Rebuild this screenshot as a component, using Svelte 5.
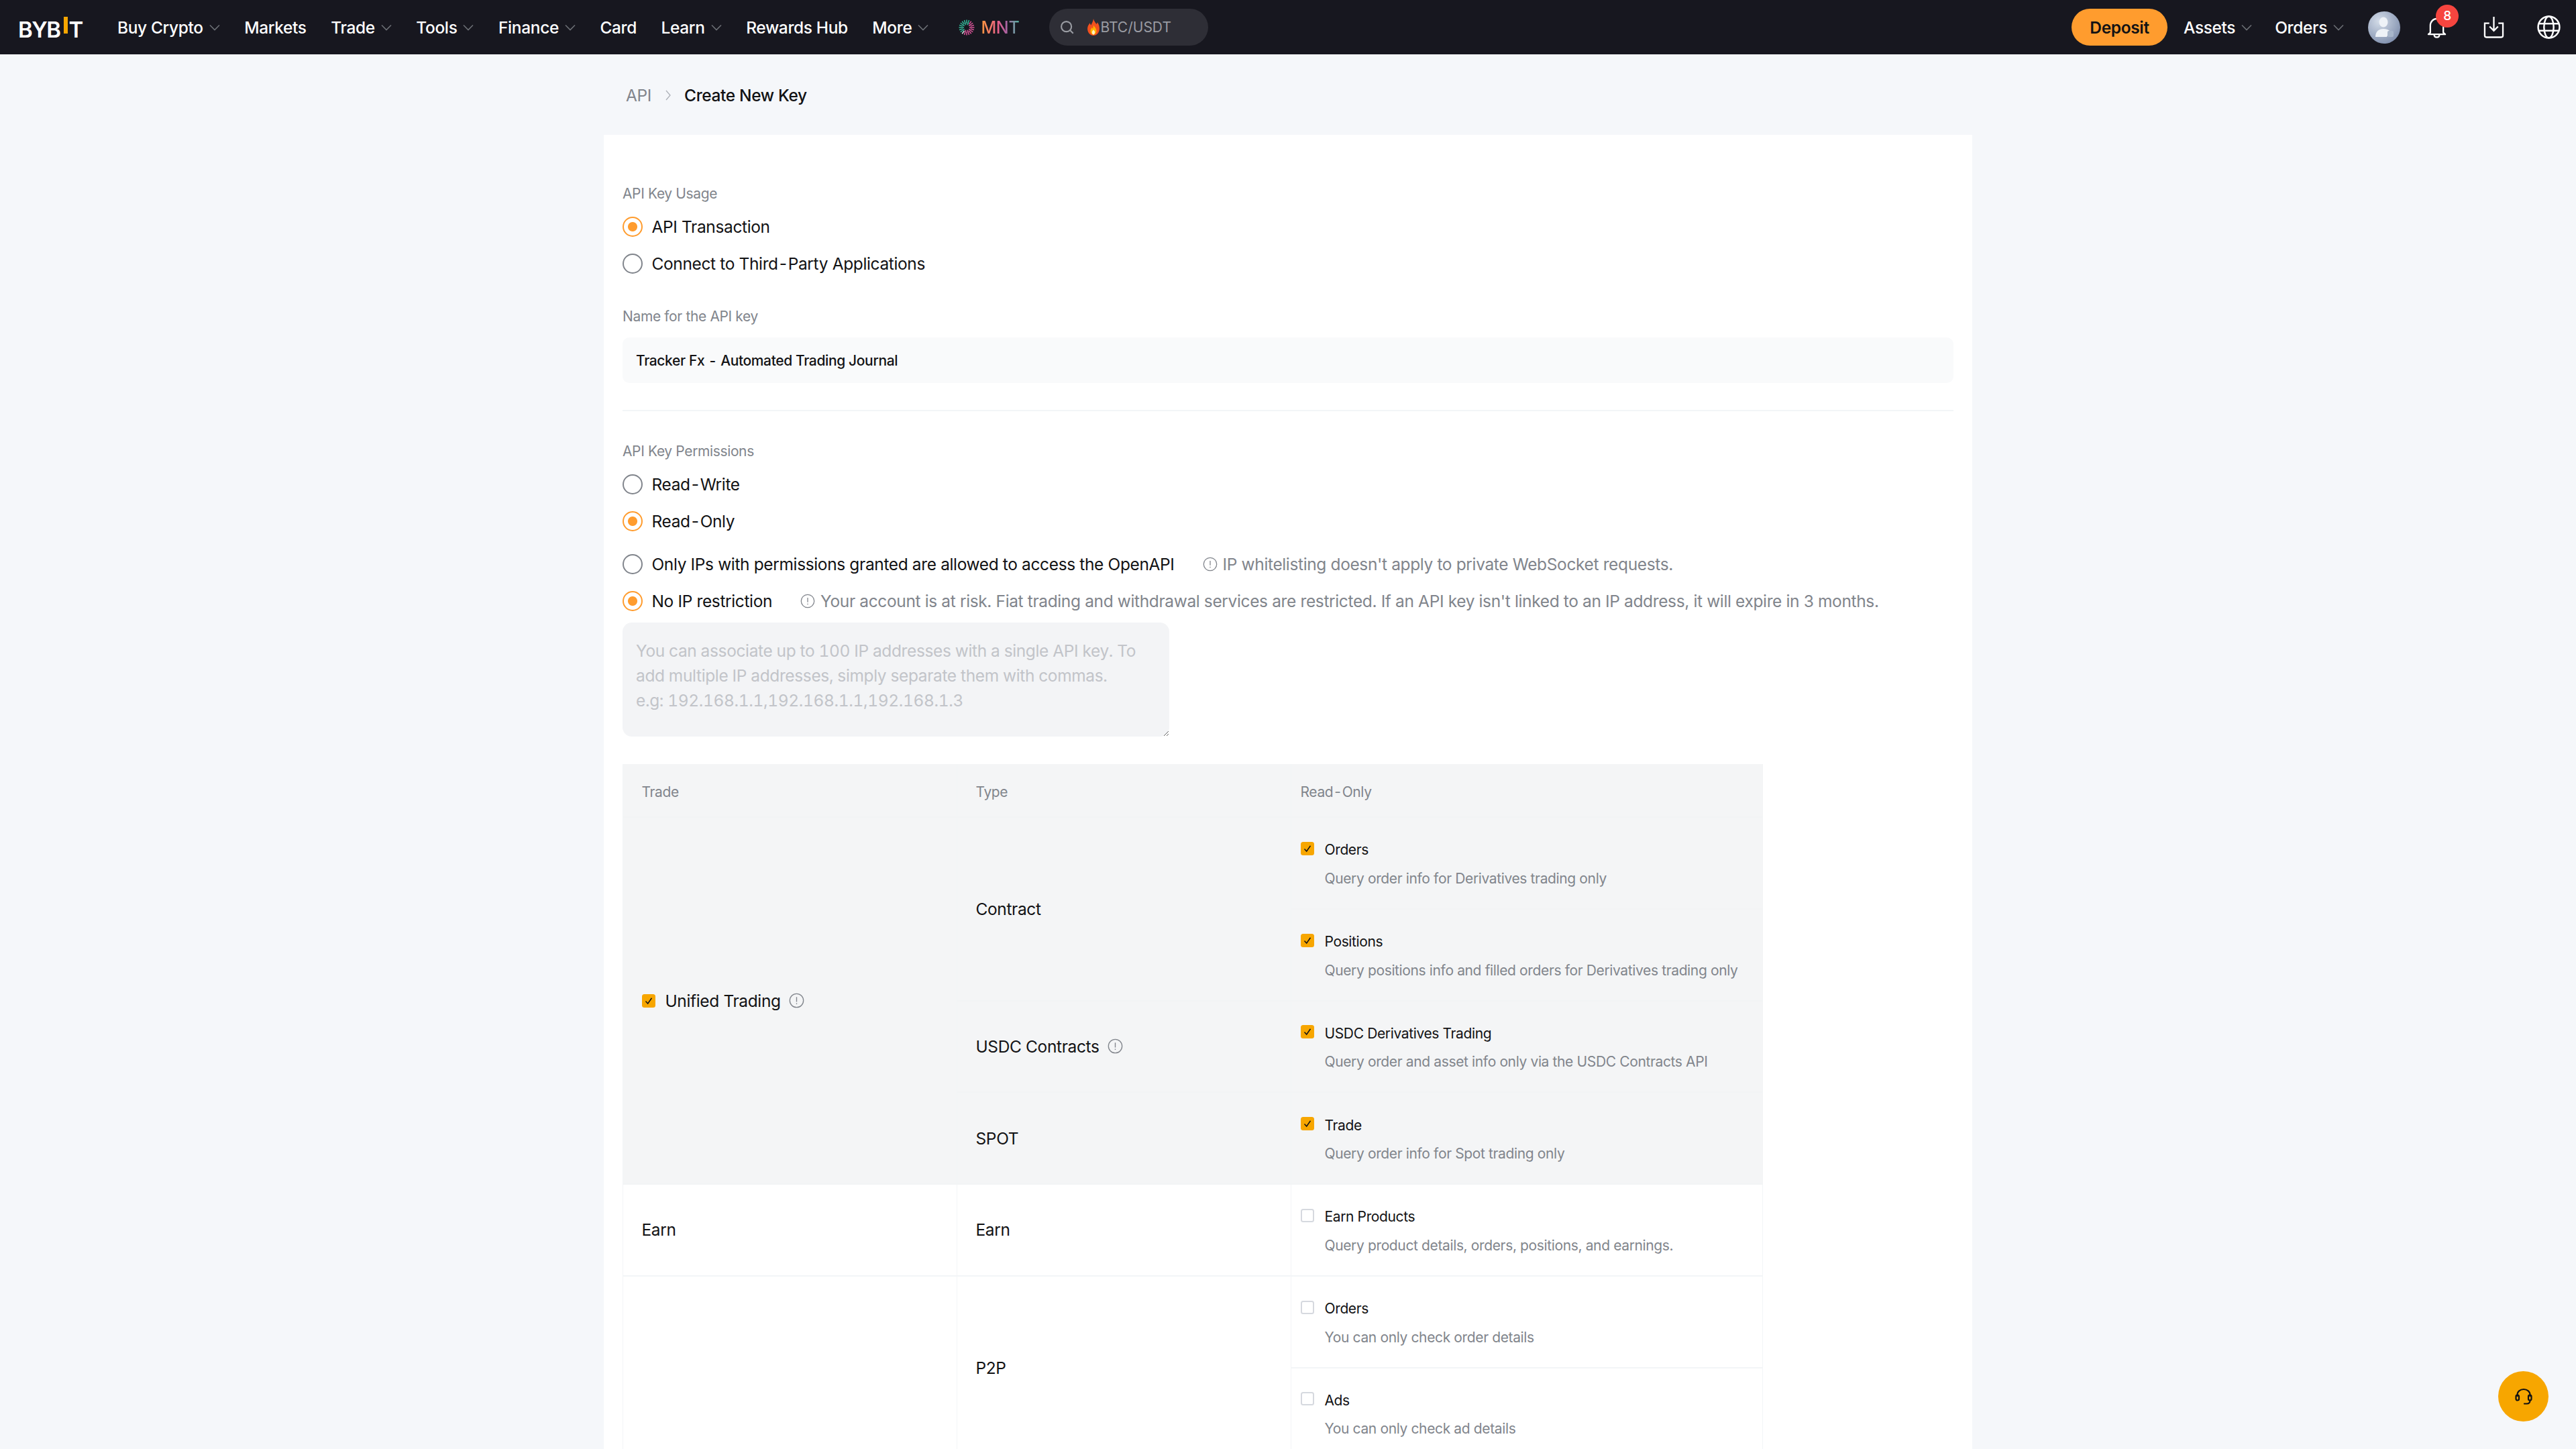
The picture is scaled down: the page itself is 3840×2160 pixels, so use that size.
<script>
	const navLeft = [
		{ label: 'Buy Crypto', arrow: true },
		{ label: 'Markets' },
		{ label: 'Trade', arrow: true },
		{ label: 'Tools', arrow: true },
		{ label: 'Finance', arrow: true },
		{ label: 'Card' },
		{ label: 'Learn', arrow: true },
		{ label: 'Rewards Hub' },
		{ label: 'More', arrow: true }
	];

	const groups = [
		{
			name: 'Unified Trading',
			info: true,
			checkbox: true,
			shaded: true,
			types: [
				{
					name: 'Contract',
					perms: [
						{ name: 'Orders', desc: 'Query order info for Derivatives trading only', on: true },
						{ name: 'Positions', desc: 'Query positions info and filled orders for Derivatives trading only', on: true }
					]
				},
				{
					name: 'USDC Contracts',
					info: true,
					perms: [
						{ name: 'USDC Derivatives Trading', desc: 'Query order and asset info only via the USDC Contracts API', on: true }
					]
				},
				{
					name: 'SPOT',
					perms: [{ name: 'Trade', desc: 'Query order info for Spot trading only', on: true }]
				}
			]
		},
		{
			name: 'Earn',
			types: [
				{
					name: 'Earn',
					perms: [{ name: 'Earn Products', desc: 'Query product details, orders, positions, and earnings.' }]
				}
			]
		},
		{
			name: '',
			types: [
				{
					name: 'P2P',
					perms: [
						{ name: 'Orders', desc: 'You can only check order details' },
						{ name: 'Ads', desc: 'You can only check ad details' }
					]
				}
			]
		}
	];

	const rowCount = (group) => group.types.reduce((n, t) => n + t.perms.length, 0);

	const mantleRays = Array.from({ length: 20 }, (_, i) => {
		const a = (i / 20) * Math.PI * 2;
		const inner = i % 2 ? 6 : 4;
		return {
			x1: 12 + Math.cos(a) * inner,
			y1: 12 + Math.sin(a) * inner,
			x2: 12 + Math.cos(a) * 11.5,
			y2: 12 + Math.sin(a) * 11.5,
			color: Math.cos(a - 0.6) > 0 ? '#d9559a' : Math.sin(a) > 0.6 ? '#d8efe8' : '#35b899'
		};
	});
</script>

{#snippet chevron()}
	<svg class="chevron" viewBox="0 0 16 10" fill="none" stroke="currentColor" stroke-width="1.6">
		<path d="M1 1.500 8 8.500 15 1.500" />
	</svg>
{/snippet}

{#snippet infoIcon(cls)}
	<svg class={cls} viewBox="0 0 24 24" fill="none" stroke="currentColor" stroke-width="1.4">
		<circle cx="12" cy="12" r="10.6" />
		<path d="M12 6.500v7.500M12 16.200v1.600" />
	</svg>
{/snippet}

{#snippet hyphenated(text)}{#each text.split('-') as part, i}{#if i}<span class="hy">-</span>{/if}{part}{/each}{/snippet}

{#snippet radio(on, label)}
	<div class="radio-row">
		<span class="radio" class:on></span>
		<span>{@render hyphenated(label)}</span>
	</div>
{/snippet}

{#snippet check(on)}
	<span class="check" class:on>
		{#if on}
			<svg viewBox="0 0 20 20" fill="none" stroke="#121214" stroke-width="1.5">
				<path d="M5.500 10.500 8.700 14 14.500 5.800" />
			</svg>
		{/if}
	</span>
{/snippet}

<div class="page">
	<header class="topbar">
		<div class="logo">
			<span>BYB</span>
			<i class="logo-bar"></i>
			<span>T</span>
		</div>

		<nav class="nav">
			{#each navLeft as item}
				<a class="nav-item">
					{item.label}
					{#if item.arrow}{@render chevron()}{/if}
				</a>
			{/each}
		</nav>

		<div class="mnt">
			<svg class="mnt-mark" viewBox="0 0 24 24" fill="none" stroke-width="1.5">
				{#each mantleRays as r}
					<line x1={r.x1} y1={r.y1} x2={r.x2} y2={r.y2} stroke={r.color} />
				{/each}
			</svg>
			<span class="mnt-text">MNT</span>
		</div>

		<div class="search">
			<svg class="search-icon" viewBox="0 0 24 24" fill="none" stroke="currentColor" stroke-width="2.400">
				<circle cx="11" cy="11" r="8.600" />
				<path d="m17.200 17.200 5.400 5.400" />
			</svg>
			<svg class="flame" viewBox="0 0 20 28">
				<path d="M10 0c1 4 3 6 5 9 1-1 1.500-2 1.500-3 2.500 3 3.500 7 3.500 10.500C20 23 15.500 28 10 28S0 23 0 16.500C0 12 2.500 9.500 4 7c.5 1.500 1 2.500 2 3.500C7.500 7.500 9.500 4 10 0Z" fill="#f4511e" />
				<path d="M10 10c.5 3 5 5 5 10.500 0 3-2.200 6-5 6s-5-3-5-6c0-3 1.500-4.500 2.500-6 .5 1 1 1.500 1.500 2 .5-2 1-4 1-6.500Z" fill="#ffb300" />
				<path d="M10 18c.5 1.500 2.500 2.500 2.500 4.500S11.300 26.500 10 26.500s-2.500-1.800-2.500-4S9.500 20 10 18Z" fill="#fff3c4" />
			</svg>
			<span>BTC/USDT</span>
		</div>

		<div class="topbar-right">
			<a class="deposit">Deposit</a>
			<a class="nav-item">Assets {@render chevron()}</a>
			<a class="nav-item">Orders {@render chevron()}</a>
			<svg class="avatar" viewBox="0 0 48 48">
				<defs>
					<radialGradient id="avatarFill" cx="0.35" cy="0.3" r="0.85">
						<stop offset="0" stop-color="#d4dde9" />
						<stop offset="1" stop-color="#7686a6" />
					</radialGradient>
				</defs>
				<circle cx="24" cy="24" r="24" fill="url(#avatarFill)" />
				<ellipse cx="23" cy="16" rx="6.500" ry="7.500" fill="#eef2f7" />
				<path d="M11 38c0-8 5-12 12-12 4 0 7 1 9 3l-4 9H11Z" fill="#eef2f7" />
				<rect x="29" y="29" width="9" height="9" rx="2" fill="#a8b6ca" />
			</svg>
			<div class="bell">
				<svg viewBox="0 0 30 32" fill="none" stroke="#fff" stroke-width="2.400">
					<path d="M5 24V13C5 7 9.500 2.500 15 2.500S25 7 25 13v11l3 2.500H2L5 24Z" stroke-linejoin="round" />
					<path d="M11 27c0 2.500 1.800 4 4 4s4-1.500 4-4" />
				</svg>
				<span class="badge">8</span>
			</div>
			<svg class="tool-icon" viewBox="0 0 32 34" fill="none" stroke="#fff" stroke-width="2.400">
				<path d="M9 11H2v19a2.500 2.500 0 0 0 2.500 2.500h23A2.500 2.500 0 0 0 30 30V11h-7" />
				<path d="M16 1v21M9.500 16l6.500 6.500 6.500-6.500" />
			</svg>
			<svg class="tool-icon globe" viewBox="0 0 34 34" fill="none" stroke="#fff" stroke-width="2.400">
				<circle cx="17" cy="17" r="15.500" />
				<ellipse cx="17" cy="17" rx="7" ry="15.500" />
				<path d="M2 12h30M2 22h30" />
			</svg>
		</div>
	</header>

	<main class="content">
		<div class="crumbs">
			<span class="crumb-link">API</span>
			<svg class="crumb-arrow" viewBox="0 0 8 16" fill="none" stroke="currentColor" stroke-width="1.3">
				<path d="M1 1l6 7-6 7" />
			</svg>
			<span class="crumb-current">Create New Key</span>
		</div>

		<section class="card">
			<div class="label first">API Key Usage</div>
			{@render radio(true, 'API Transaction')}
			{@render radio(false, 'Connect to Third-Party Applications')}

			<div class="label name-label">Name for the API key</div>
			<div class="input">{@render hyphenated('Tracker Fx - Automated Trading Journal')}</div>
			<div class="divider"></div>

			<div class="label">API Key Permissions</div>
			{@render radio(false, 'Read-Write')}
			{@render radio(true, 'Read-Only')}

			<div class="ip-rows">
				<div class="radio-row">
					<span class="radio"></span>
					<span>Only IPs with permissions granted are allowed to access the OpenAPI</span>
					<span class="hint hint-a">
						{@render infoIcon('hint-icon')}
						IP whitelisting doesn't apply to private WebSocket requests.
					</span>
				</div>
				<div class="radio-row">
					<span class="radio on"></span>
					<span>No IP restriction</span>
					<span class="hint hint-b">
						{@render infoIcon('hint-icon')}
						Your account is at risk. Fiat trading and withdrawal services are restricted. If an API key isn't linked to an IP address, it will expire in 3 months.
					</span>
				</div>
			</div>

			<div class="ip-box">
				You can associate up to 100 IP addresses with a single API key. To add multiple IP addresses, simply separate them with commas.<br />
				e.g: 192.168.1.1,192.168.1.1,192.168.1.3
			</div>

			<div class="perm-table">
				<div class="cell head shaded col1">Trade</div>
				<div class="cell head shaded col2">Type</div>
				<div class="cell head shaded col3">{@render hyphenated('Read-Only')}</div>

				{#each groups as group}
					<div class="cell col1 body" class:shaded={group.shaded} style="grid-row: span {rowCount(group)}">
						{#if group.checkbox}{@render check(true)}{/if}
						<span>{group.name}</span>
						{#if group.info}{@render infoIcon('cell-info')}{/if}
					</div>
					{#each group.types as type}
						<div class="cell col2 body" class:shaded={group.shaded} style="grid-row: span {type.perms.length}">
							<span>{type.name}</span>
							{#if type.info}{@render infoIcon('cell-info')}{/if}
						</div>
						{#each type.perms as perm}
							<div class="cell col3 perm" class:shaded={group.shaded}>
								<div class="perm-name">
									{@render check(perm.on)}
									<span>{perm.name}</span>
								</div>
								<div class="perm-desc">{perm.desc}</div>
							</div>
						{/each}
					{/each}
				{/each}
			</div>
		</section>
	</main>

	<button class="support" aria-label="Support">
		<svg viewBox="0 0 26 26" fill="none" stroke="#121214" stroke-width="2.200">
			<path d="M3.500 13V10.500C3.500 5.500 7.500 2 13 2s9.500 3.500 9.500 8.500V13" />
			<rect x="1.500" y="10.500" width="4.500" height="8" rx="2.200" />
			<rect x="20" y="10.500" width="4.500" height="8" rx="2.200" />
			<path d="M22.500 18.500c0 3-2 5-5 5h-3.500" stroke-linecap="round" />
		</svg>
	</button>
</div>

<style>
	:global(body) {
		margin: 0;
		background: #f5f7fa;
	}

	.page {
		height: 2160px;
		overflow: hidden;
		font-family: Inter, 'Liberation Sans', sans-serif;
		font-size: 24.5px;
		letter-spacing: -0.015em;
		color: #121214;
		background: #f5f7fa;
	}

	.hy {
		margin: 0 2px;
	}

	.topbar {
		display: flex;
		align-items: center;
		height: 81px;
		padding: 0 23px 0 27px;
		background: #17171f;
		color: #fff;
	}

	.logo {
		display: flex;
		align-items: flex-start;
		width: 96px;
		height: 32px;
		margin: 0 52px 0 0;
		font-size: 33px;
		font-weight: 600;
		line-height: 38px;
		letter-spacing: -1.500px;
	}

	.logo-bar {
		flex: none;
		width: 6px;
		height: 25px;
		margin: 0 2px 0 5px;
		background: #f7a600;
	}

	.nav {
		display: flex;
		align-items: center;
		gap: 36.500px;
	}

	.nav-item {
		display: inline-flex;
		align-items: center;
		gap: 9px;
		font-weight: 500;
		white-space: nowrap;
	}

	.chevron {
		width: 16px;
		height: 10px;
		color: #6c6f75;
	}

	.mnt {
		display: flex;
		align-items: center;
		gap: 9px;
		margin-left: 45px;
	}

	.mnt-mark {
		width: 24px;
		height: 24px;
	}

	.mnt-text {
		font-weight: 500;
		font-size: 25px;
		color: transparent;
		background: linear-gradient(90deg, #ff9a3c 0%, #e8608a 45%, #b05fa0 65%, #55b0a0 100%);
		-webkit-background-clip: text;
		background-clip: text;
	}

	.search {
		display: flex;
		align-items: center;
		width: 237px;
		height: 55px;
		box-sizing: border-box;
		margin-left: 45px;
		padding-left: 16px;
		border-radius: 28px;
		background: #2e2e36;
		color: #9a9ca3;
		font-size: 21px;
		letter-spacing: 0;
	}

	.search-icon {
		width: 21px;
		height: 21px;
		margin-right: 20px;
	}

	.flame {
		width: 18px;
		height: 25px;
		margin-right: 1px;
	}

	.topbar-right {
		display: flex;
		align-items: center;
		margin-left: auto;
	}

	.deposit {
		display: flex;
		align-items: center;
		justify-content: center;
		width: 143px;
		height: 55px;
		margin-right: 24px;
		border-radius: 28px;
		background: #ff9c2e;
		color: #121214;
		font-weight: 600;
	}

	.topbar-right .nav-item + .nav-item {
		margin-left: 34px;
	}

	.avatar {
		width: 48px;
		height: 48px;
		margin-left: 36px;
	}

	.bell {
		position: relative;
		width: 29px;
		height: 32px;
		margin-left: 40px;
	}

	.bell svg {
		display: block;
		width: 100%;
		height: 100%;
	}

	.badge {
		position: absolute;
		top: -18px;
		left: 13px;
		width: 34px;
		height: 34px;
		border-radius: 50%;
		background: #f6453f;
		color: #fff;
		font-size: 19px;
		font-weight: 500;
		line-height: 34px;
		text-align: center;
	}

	.tool-icon {
		width: 31px;
		height: 33px;
		margin-left: 55px;
	}

	.globe {
		width: 35px;
		height: 35px;
		margin-left: 49px;
	}

	.crumbs {
		display: flex;
		align-items: center;
		width: 2040px;
		height: 42px;
		padding: 40px 0 38px 33px;
		box-sizing: content-box;
		margin-left: 900px;
	}

	.crumb-link {
		color: #81858c;
	}

	.crumb-arrow {
		width: 8px;
		height: 16px;
		margin: 0 20px 0 21px;
		color: #adb1b8;
	}

	.crumb-current {
		font-weight: 500;
	}

	.card {
		box-sizing: border-box;
		width: 2040px;
		min-height: 2000px;
		margin: 0 auto;
		padding: 73px 28px 0;
		background: #fff;
	}

	.label {
		height: 30px;
		margin-bottom: 7px;
		font-size: 21px;
		line-height: 30px;
		color: #81858c;
	}

	.name-label {
		margin-top: 37px;
		margin-bottom: 16px;
	}

	.radio-row {
		display: flex;
		align-items: center;
		height: 54.500px;
		white-space: nowrap;
	}

	.radio {
		flex: none;
		box-sizing: border-box;
		width: 30px;
		height: 30px;
		margin-right: 13.500px;
		border: 2px solid #81858c;
		border-radius: 50%;
		background: #fff;
	}

	.radio.on {
		border-color: #ff9c2e;
		background: radial-gradient(circle, #ff9c2e 0 6.500px, #fff 7.500px);
	}

	.input {
		display: flex;
		align-items: center;
		height: 68px;
		padding-left: 20px;
		border-radius: 10px;
		background: #f9fafb;
		font-size: 21px;
		font-weight: 450;
		white-space: pre;
	}

	.divider {
		height: 2px;
		margin: 40px 0 45px;
		background: #f3f5f7;
	}

	.ip-rows {
		margin-top: 10px;
	}

	.hint {
		display: inline-flex;
		align-items: center;
		color: #81858c;
	}

	.hint-a,
	.hint-b {
		margin-left: 42px;
	}

	.hint :global(.hint-icon) {
		width: 22px;
		height: 22px;
		margin-right: 8px;
	}

	.ip-box {
		box-sizing: border-box;
		width: 815px;
		height: 170px;
		margin-top: 5px;
		padding: 24px 20px 0;
		overflow: auto;
		resize: both;
		border-radius: 14px;
		background: #f3f4f6;
		color: #c2c4c9;
		font-feature-settings: 'tnum';
		line-height: 36.750px;
	}

	.perm-table {
		display: grid;
		grid-template-columns: 497.500px 498px 703px;
		grid-template-rows: 80px;
		grid-auto-rows: 136.750px;
		margin-top: 41px;
		border-left: 1.500px solid #f3f5f7;
	}

	.cell {
		box-sizing: border-box;
		border-right: 1.500px solid #f3f5f7;
		border-bottom: 2px solid #f3f5f7;
	}

	.cell.shaded {
		border-color: #f2f4f5;
		background: #f4f5f6;
	}

	.col1 {
		grid-column: 1;
		padding-left: 27.500px;
	}

	.col2 {
		grid-column: 2;
		padding-left: 28px;
	}

	.col3 {
		grid-column: 3;
		padding-left: 14px;
	}

	.head {
		display: flex;
		align-items: center;
		padding-top: 4px;
		font-size: 21px;
		color: #81858c;
	}

	.body {
		display: flex;
		align-items: center;
	}

	.body :global(.cell-info) {
		flex: none;
		width: 23px;
		height: 23px;
		margin-left: 12.500px;
		color: #81858c;
	}

	.check {
		flex: none;
		box-sizing: border-box;
		width: 20px;
		height: 20px;
		margin-right: 15px;
		border-radius: 3.500px;
		border: 2px solid #d6d9df;
		background: #fff;
	}

	.check.on {
		border: 0;
		background: #f7a600;
	}

	.check svg {
		display: block;
		width: 20px;
		height: 20px;
	}

	.perm {
		display: flex;
		flex-direction: column;
		justify-content: center;
		padding-top: 4px;
		font-size: 21px;
	}

	.perm-name {
		display: flex;
		align-items: center;
		height: 30px;
		margin-bottom: 13px;
		font-weight: 400;
	}

	.perm-name .check {
		margin-top: -4px;
		margin-right: 16px;
	}

	.perm-desc {
		height: 30px;
		padding-left: 36px;
		line-height: 30px;
		color: #81858c;
	}

	.support {
		position: fixed;
		right: 41px;
		bottom: 41px;
		display: flex;
		align-items: center;
		justify-content: center;
		width: 75px;
		height: 75px;
		padding: 0;
		border: 0;
		border-radius: 50%;
		background: #f7a600;
	}

	.support svg {
		width: 26px;
		height: 26px;
	}
</style>
